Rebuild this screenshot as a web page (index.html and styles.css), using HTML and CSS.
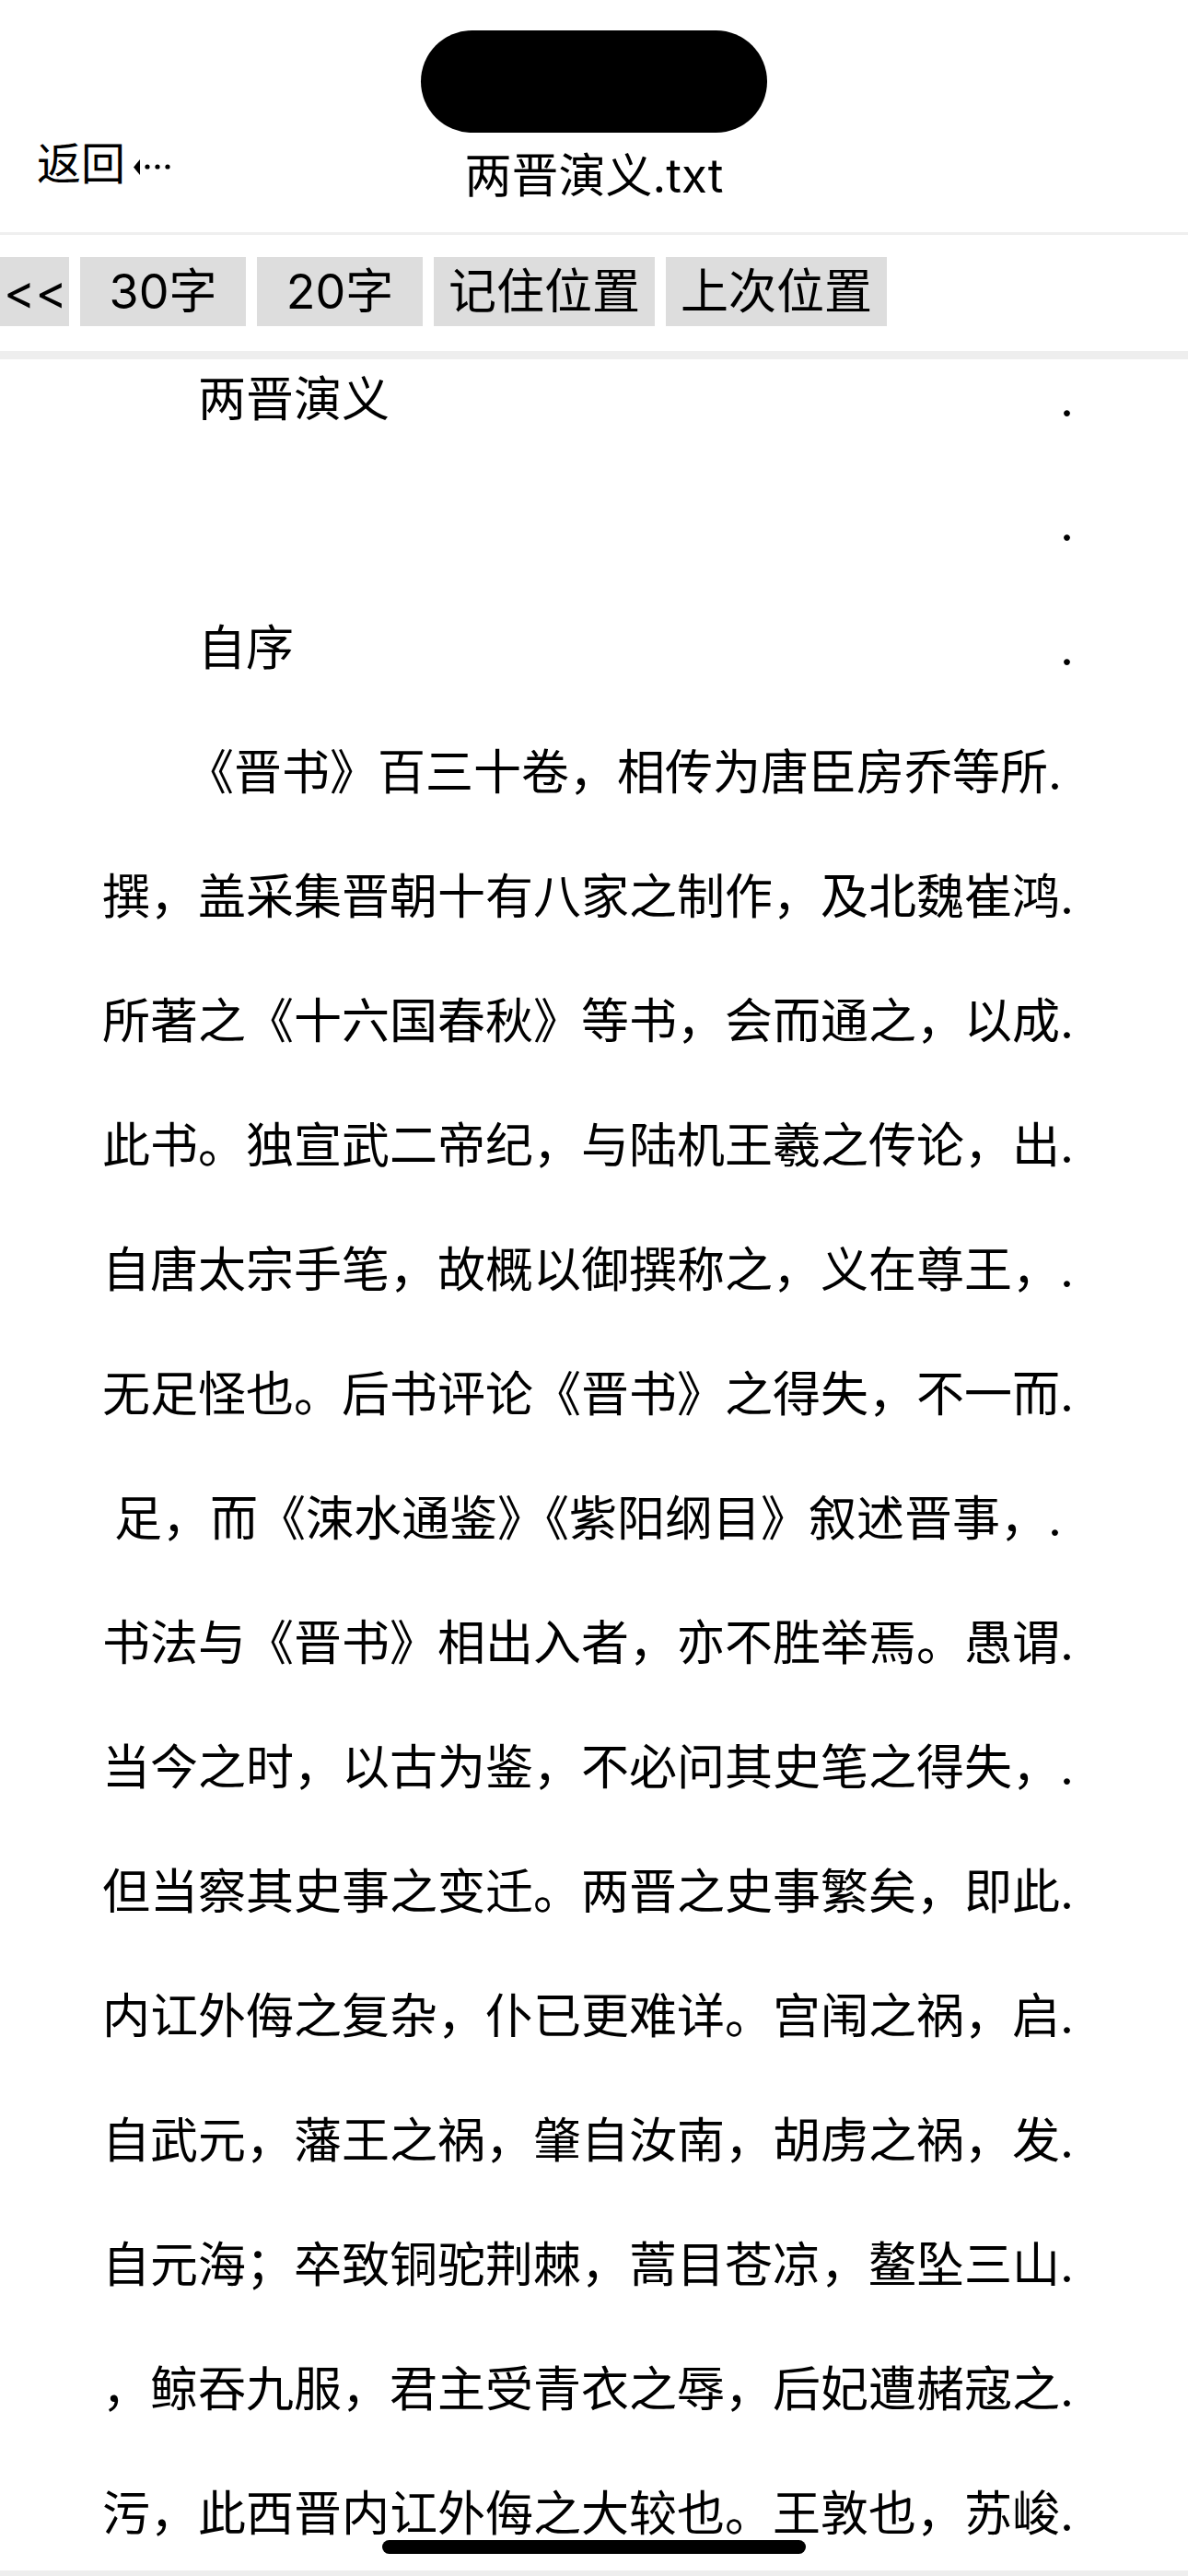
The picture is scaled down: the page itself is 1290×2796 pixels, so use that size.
FILE: index.html
```html
<!DOCTYPE html>
<html lang="zh-CN">
<head>
<meta charset="utf-8">
<title>两晋演义.txt</title>
<link rel="stylesheet" href="styles.css">
</head>
<body>
<div class="screen">
  <div class="status"><div class="island"></div></div>
  <header class="nav">
    <div class="nav-left">
      <span class="back-text">返回</span>
      <svg class="back-icon" width="42" height="26" viewBox="0 0 42 26" aria-hidden="true">
        <polygon points="0,16.5 7,8 7,25" fill="#000"/>
        <circle cx="15" cy="16" r="2.6" fill="#000"/>
        <circle cx="26" cy="16" r="2.6" fill="#000"/>
        <circle cx="37" cy="16" r="2.6" fill="#000"/>
      </svg>
    </div>
    <div class="nav-title">两晋演义.txt</div>
    <div class="nav-right"></div>
  </header>
  <div class="rule"></div>
  <div class="toolbar">
    <div class="btn btn-back">&lt;&lt;</div>
    <div class="btn">30字</div>
    <div class="btn">20字</div>
    <div class="btn">记住位置</div>
    <div class="btn">上次位置</div>
  </div>
  <div class="band"></div>
  <main class="reader">
    <div class="row">　　两晋演义　　　　　　　　　　　　　　.</div>
    <div class="row">　　　　　　　　　　　　　　　　　　　　.</div>
    <div class="row">　　自序　　　　　　　　　　　　　　　　.</div>
    <div class="row">　　《晋书》百三十卷，相传为唐臣房乔等所.</div>
    <div class="row">撰，盖采集晋朝十有八家之制作，及北魏崔鸿.</div>
    <div class="row">所著之《十六国春秋》等书，会而通之，以成.</div>
    <div class="row">此书。独宣武二帝纪，与陆机王羲之传论，出.</div>
    <div class="row">自唐太宗手笔，故概以御撰称之，义在尊王，.</div>
    <div class="row">无足怪也。后书评论《晋书》之得失，不一而.</div>
    <div class="row">足，而《涑水通鉴》《紫阳纲目》叙述晋事，.</div>
    <div class="row">书法与《晋书》相出入者，亦不胜举焉。愚谓.</div>
    <div class="row">当今之时，以古为鉴，不必问其史笔之得失，.</div>
    <div class="row">但当察其史事之变迁。两晋之史事繁矣，即此.</div>
    <div class="row">内讧外侮之复杂，仆已更难详。宫闱之祸，启.</div>
    <div class="row">自武元，藩王之祸，肇自汝南，胡虏之祸，发.</div>
    <div class="row">自元海；卒致铜驼荆棘，蒿目苍凉，鳌坠三山.</div>
    <div class="row">，鲸吞九服，君主受青衣之辱，后妃遭赭寇之.</div>
    <div class="row">污，此西晋内讧外侮之大较也。王敦也，苏峻.</div>
  </main>
  <div class="band-bottom"></div>
  <div class="home-indicator"></div>
</div>
</body>
</html>
```

FILE: styles.css
```css
html, body {
  margin: 0;
  padding: 0;
  background: #fff;
}

body {
  font-family: Inter, "Noto Sans CJK SC", sans-serif;
  color: #000;
}

.screen {
  position: relative;
  width: 1290px;
  height: 2796px;
  overflow: hidden;
  display: flex;
  flex-direction: column;
  background: #fff;
}

.status {
  padding-top: 33px;
  display: flex;
  justify-content: center;
  flex: none;
}

.island {
  width: 376px;
  height: 111px;
  border-radius: 56px;
  background: #000;
}

.nav {
  height: 108px;
  flex: none;
  display: grid;
  grid-template-columns: 1fr auto 1fr;
  align-items: start;
}

.nav-left {
  margin-top: 10px;
  padding-left: 40px;
  display: flex;
  align-items: center;
  height: 48px;
}

.back-text {
  font-size: 48px;
  line-height: 48px;
}

.back-icon {
  display: block;
  margin-left: 9px;
}

.nav-title {
  margin-top: 21px;
  font-size: 51px;
  line-height: 52px;
  white-space: nowrap;
}

.rule {
  height: 3px;
  background: #efefef;
  flex: none;
}

.toolbar {
  flex: none;
  display: flex;
  gap: 12px;
  padding: 24px 0 27px;
}

.btn {
  box-sizing: border-box;
  height: 75px;
  min-width: 180px;
  padding: 0 16px;
  background: #dddddd;
  font-size: 52px;
  line-height: 75px;
  text-align: center;
  white-space: nowrap;
}

.btn-back {
  min-width: 0;
  width: 75px;
  padding: 0 0 0 4px;
  text-align: left;
  overflow: hidden;
}

.band {
  height: 9px;
  background: #eeeeee;
  flex: none;
}

.reader {
  flex: 1;
  overflow: hidden;
  padding: 4px 13px 0 0;
}

.row {
  height: 135px;
  font-size: 52px;
  line-height: 80px;
  text-align: center;
  white-space: nowrap;
}

.band-bottom {
  height: 6px;
  background: #eeeeee;
  flex: none;
}

.home-indicator {
  position: absolute;
  left: 50%;
  bottom: 24px;
  width: 460px;
  height: 15px;
  margin-left: -230px;
  border-radius: 8px;
  background: #000;
}
```
